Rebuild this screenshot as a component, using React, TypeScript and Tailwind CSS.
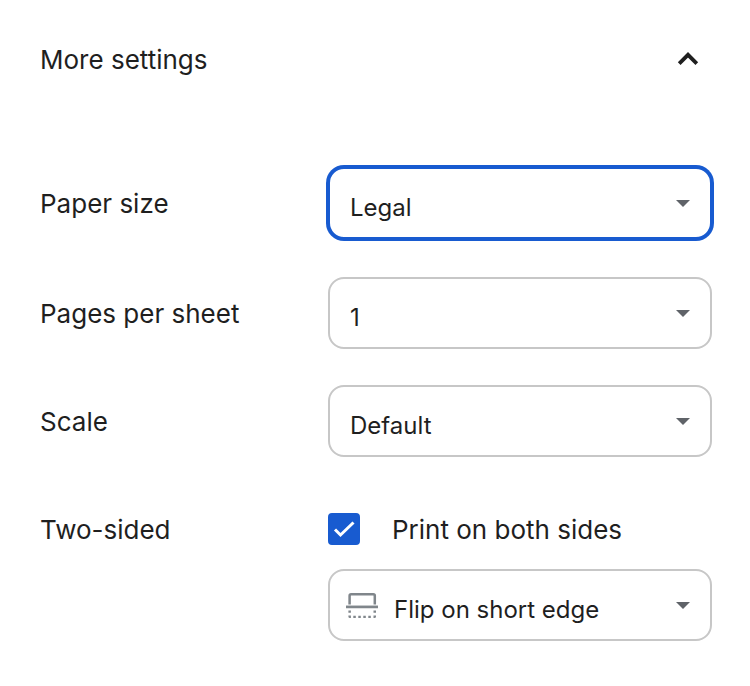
import React, { useState } from "react";

type SelectProps = {
  id: string;
  label?: string;
  options: string[];
  focused?: boolean;
  icon?: React.ReactNode;
};

function Select({ id, label, options, focused, icon }: SelectProps) {
  return (
    <div className="relative">
      <select
        id={id}
        aria-label={label}
        className={`block h-[72px] w-full appearance-none rounded-2xl border-2 bg-white pt-2.5 pr-14 text-2xl leading-8 text-[#1f1f1f] outline-none ${
          icon ? "pl-16" : "pl-5"
        } ${focused ? "border-[#185bd0] ring-2 ring-[#185bd0]" : "border-[#c7c7c7]"}`}
      >
        {options.map((o) => (
          <option key={o}>{o}</option>
        ))}
      </select>
      {icon && <span className="pointer-events-none absolute top-5 left-4">{icon}</span>}
      <svg className="pointer-events-none absolute top-8 right-5" width="18" height="8" viewBox="0 0 18 8" aria-hidden="true">
        <path d="M2 1h14L9 8z" fill="#5f6368" />
      </svg>
    </div>
  );
}

function FlipIcon() {
  return (
    <svg width="36" height="32" viewBox="0 0 36 32" fill="none" stroke="#80868b" aria-hidden="true">
      <path d="M5.6 15.5V6.8q0-1.5 1.5-1.5h22.2q1.5 0 1.5 1.5v8.7" strokeWidth="2.5" />
      <path d="M2 17.9h32" strokeWidth="2.7" />
      <g fill="#80868b" stroke="none">
        <path d="M4.4 21.4h2.5v2.4h-2.5zM29.5 21.4h2.5v2.4h-2.5z" />
        <path d="M4.4 26.4h2.5v2.7h-1q-1.5 0-1.5-1.5zM29.5 26.4h2.5v1.2q0 1.5-1.5 1.5h-1z" />
        <path d="M9.3 26.7h2.5v2.4H9.3zM14.3 26.7h2.5v2.4h-2.5zM19.3 26.7h2.5v2.4h-2.5zM24.3 26.7h2.5v2.4h-2.5z" />
      </g>
    </svg>
  );
}

const row = "grid grid-cols-[288px_1fr] items-center";

export default function App() {
  const [both, setBoth] = useState(true);
  return (
    <main className="bg-white pt-6 pr-[38px] pb-[45px] pl-10 font-['Inter',sans-serif] text-[26px] leading-8 text-[#1f1f1f]">
      <button type="button" aria-expanded="true" className="flex h-[72px] w-full items-center justify-between pr-3 text-left">
        More settings
        <svg width="24" height="24" viewBox="0 0 24 24" fill="none" stroke="#1f1f1f" strokeWidth="3.8" aria-hidden="true">
          <path d="M3.2 15.6L12 6.8l8.8 8.8" />
        </svg>
      </button>
      <div className="mt-[71px] flex flex-col gap-9">
        <div className={`${row} mb-0.5`}>
          <label htmlFor="paper" className="pt-0.5">Paper size</label>
          <Select id="paper" options={["Legal", "Letter", "A4"]} focused />
        </div>
        <div className={row}>
          <label htmlFor="pages" className="pt-0.5">Pages per sheet</label>
          <Select id="pages" options={["1", "2", "4"]} />
        </div>
        <div className={row}>
          <label htmlFor="scale" className="pt-0.5">Scale</label>
          <Select id="scale" options={["Default", "Custom"]} />
        </div>
        <div className="grid grid-cols-[288px_1fr]">
          <span className="flex h-[72px] items-center pt-0.5">Two-sided</span>
          <div>
            <label className="mb-1 flex h-[72px] items-center gap-8">
              <span className="relative block size-8">
                <input
                  type="checkbox"
                  checked={both}
                  onChange={(e) => setBoth(e.target.checked)}
                  className="block size-8 appearance-none rounded-[4px] border-2 border-[#185bd0] checked:bg-[#185bd0]"
                />
                <svg className="pointer-events-none absolute inset-0" viewBox="0 0 32 32" fill="none" stroke="#fff" strokeWidth="3" aria-hidden="true">
                  <path d="M7 16.5l5.5 5.5L25.5 9.5" />
                </svg>
              </span>
              <span className="pt-0.5">Print on both sides</span>
            </label>
            <Select id="flip" label="Flip edge" options={["Flip on short edge", "Flip on long edge"]} icon={<FlipIcon />} />
          </div>
        </div>
      </div>
    </main>
  );
}
